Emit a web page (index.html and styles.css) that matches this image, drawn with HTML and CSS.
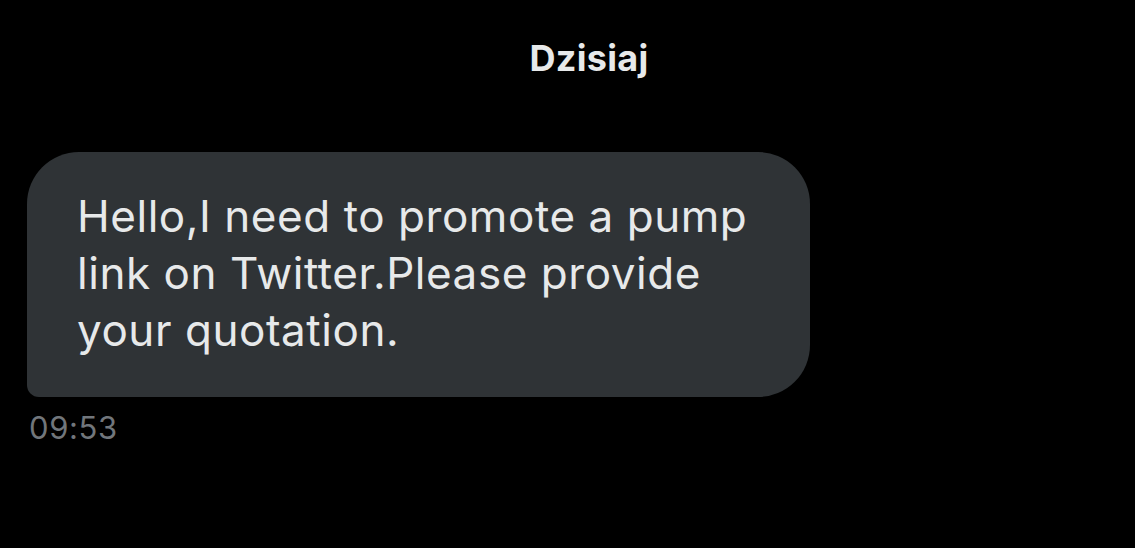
FILE: index.html
```html
<!DOCTYPE html>
<html lang="pl">
<head>
<meta charset="utf-8">
<link rel="stylesheet" href="styles.css">
</head>
<body>
<main class="chat">
  <div class="day">Dzisiaj</div>
  <div class="msg">
    <div class="bubble">Hello,I need to promote a pump link on Twitter.Please provide your quotation.</div>
    <div class="time">09:53</div>
  </div>
</main>
</body>
</html>
```

FILE: styles.css
```css
html, body {
  margin: 0;
  padding: 0;
  background: #000;
  height: 100%;
}
body {
  font-family: Inter, "Noto Sans", sans-serif;
  color: #e7e9ea;
}
.chat {
  display: flex;
  flex-direction: column;
  padding: 0 0 0 27px;
}
.day {
  align-self: center;
  margin: 36px 0 0 16px;
  font-size: 36px;
  font-weight: 700;
  line-height: 45px;
  letter-spacing: 0.3px;
  color: #e7e9ea;
}
.msg {
  display: flex;
  flex-direction: column;
  align-items: flex-start;
  margin-top: 71px;
}
.bubble {
  box-sizing: border-box;
  width: 783px;
  height: 245px;
  padding: 36px 20px 0 50px;
  background: #2f3336;
  border-radius: 52px 52px 52px 12px;
  font-size: 44px;
  line-height: 57px;
  letter-spacing: 0.55px;
  color: #e7e9ea;
}
.time {
  margin: 11px 0 0 2px;
  font-size: 31px;
  line-height: 40px;
  letter-spacing: 0.6px;
  color: #71767b;
}
```
